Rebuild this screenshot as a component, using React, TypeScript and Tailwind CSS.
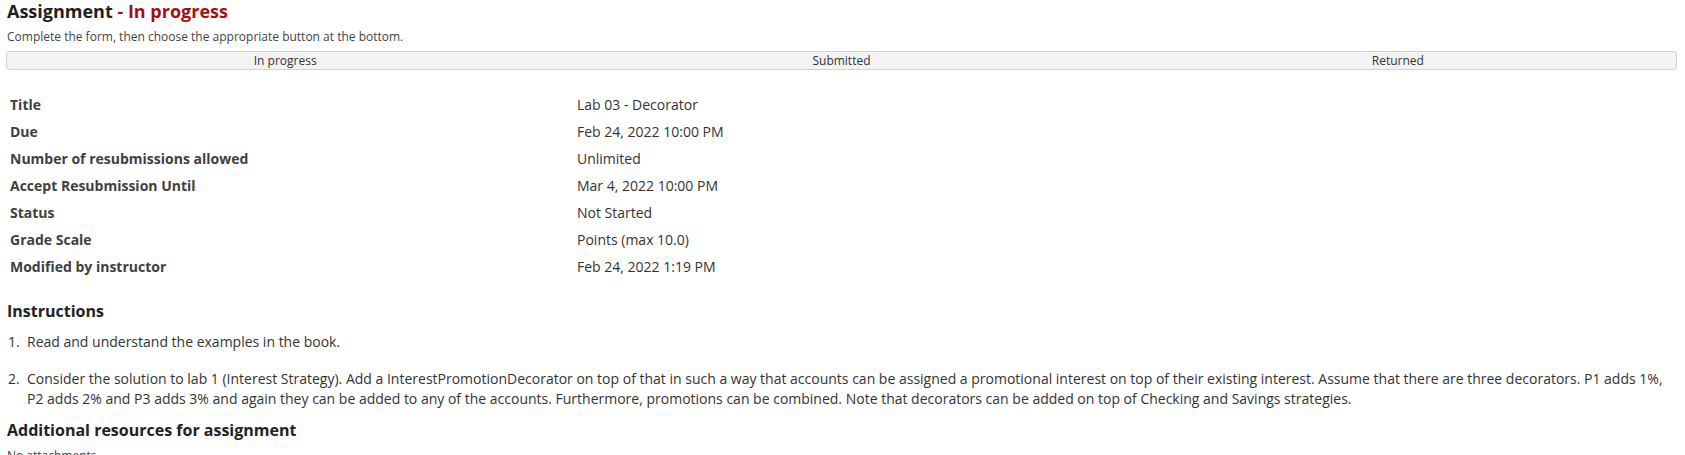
import React from "react";

const rows: [string, string][] = [
  ["Title", "Lab 03 - Decorator"],
  ["Due", "Feb 24, 2022 10:00 PM"],
  ["Number of resubmissions allowed", "Unlimited"],
  ["Accept Resubmission Until", "Mar 4, 2022 10:00 PM"],
  ["Status", "Not Started"],
  ["Grade Scale", "Points (max 10.0)"],
  ["Modified by instructor", "Feb 24, 2022 1:19 PM"],
];

export default function App() {
  return (
    <div
      className="bg-white text-[#333] h-[455px] overflow-hidden px-[7px]"
      style={{ fontFamily: '"Open Sans", "Liberation Sans", sans-serif' }}
    >
      <h2 className="text-[18px] leading-[22px] font-bold text-[#1f1f1f]">
        Assignment <span className="text-[#a30f0f]">- In progress</span>
      </h2>
      <p className="text-[12px] leading-[16px] text-[#444] mt-[7px]">
        Complete the form, then choose the appropriate button at the bottom.
      </p>
      <div className="mt-[6px] -ml-[1px] w-[1671px] h-[19px] grid grid-cols-3 border border-[#d3d3d3] rounded-[3px] bg-[#f3f3f3] text-[12px] leading-[17px] text-[#333]">
        <div className="text-center">In progress</div>
        <div className="text-center">Submitted</div>
        <div className="text-center">Returned</div>
      </div>
      <div className="mt-[21px]">
        {rows.map(([k, v]) => (
          <div key={k} className="flex h-[27px] items-center text-[14px]">
            <div className="w-[570px] pl-[3px] font-bold text-[#404040]">{k}</div>
            <div className="text-[#333]">{v}</div>
          </div>
        ))}
      </div>
      <h3 className="mt-[20px] text-[16px] leading-[22px] font-bold text-[#222]">Instructions</h3>
      <ol className="mt-[10px] text-[14px] leading-[20px] text-[#333]">
        <li className="flex">
          <span className="w-[20px] shrink-0 pl-[1px]">1.</span>
          <span>Read and understand the examples in the book.</span>
        </li>
        <li className="flex mt-[17px]">
          <span className="w-[20px] shrink-0 pl-[1px]">2.</span>
          <span>
            Consider the solution to lab 1 (Interest Strategy). Add a InterestPromotionDecorator on top of that in such a
            way that accounts can be assigned a promotional interest on top of their existing interest. Assume that there
            are three decorators. P1 adds 1%, P2 adds 2% and P3 adds 3% and again they can be added to any of the
            accounts. Furthermore, promotions can be combined. Note that decorators can be added on top of Checking and
            Savings strategies.
          </span>
        </li>
      </ol>
      <h3 className="mt-[10px] text-[16px] leading-[22px] font-bold text-[#222]">
        Additional resources for assignment
      </h3>
      <p className="mt-[7px] text-[12px] leading-[16px] text-[#444]">No attachments</p>
    </div>
  );
}
